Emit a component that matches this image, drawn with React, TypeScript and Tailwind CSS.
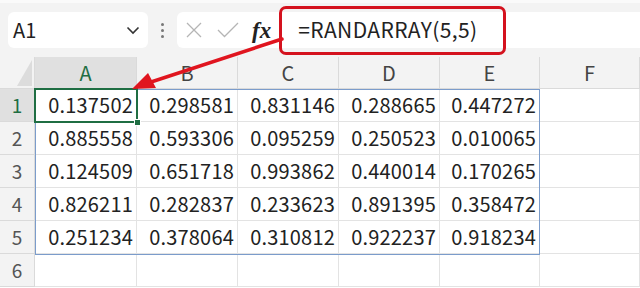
const data = [
  ["0.137502", "0.298581", "0.831146", "0.288665", "0.447272"],
  ["0.885558", "0.593306", "0.095259", "0.250523", "0.010065"],
  ["0.124509", "0.651718", "0.993862", "0.440014", "0.170265"],
  ["0.826211", "0.282837", "0.233623", "0.891395", "0.358472"],
  ["0.251234", "0.378064", "0.310812", "0.922237", "0.918234"],
];

const cols = ["A", "B", "C", "D", "E", "F"];

export default function App() {
  return (
    <div
      className="relative w-[640px] h-[288px] overflow-hidden bg-white text-[#222]"
      style={{ fontFamily: '"Noto Sans CJK JP", "Noto Sans", sans-serif' }}
    >
      {/* toolbar */}
      <div className="h-[57px] bg-[#f3f3f3] flex items-center border-t-[3px] border-[#fafafa]">
        <div className="ml-2 w-[140px] h-9 bg-white rounded-md flex items-center justify-between pl-[5px] pr-[6px]">
          <span className="text-[20px] text-[#222]">A1</span>
          <svg width="14" height="10" viewBox="0 0 14 10" className="mr-[2px]">
            <path d="M1.5 2.5 L7 8 L12.5 2.5" fill="none" stroke="#333" strokeWidth="1.6" />
          </svg>
        </div>
        <div className="w-[29px] flex flex-col items-center gap-[3px]">
          <span className="w-[3px] h-[3px] rounded-full bg-[#777]" />
          <span className="w-[3px] h-[3px] rounded-full bg-[#777]" />
          <span className="w-[3px] h-[3px] rounded-full bg-[#777]" />
        </div>
        <div className="flex-1 h-9 bg-white rounded-l-md flex items-center">
          <svg width="16" height="16" viewBox="0 0 16 16" className="ml-[9px]">
            <path d="M1 1 L15 15 M15 1 L1 15" stroke="#b5b5b5" strokeWidth="1.3" />
          </svg>
          <svg width="22" height="16" viewBox="0 0 22 16" className="ml-[15px]">
            <path d="M1 8 L7.5 14.5 L21 1" fill="none" stroke="#b5b5b5" strokeWidth="1.3" />
          </svg>
          <span
            className="ml-[13px] text-[23px] italic font-semibold text-[#222] leading-none"
            style={{ fontFamily: '"Liberation Serif", serif' }}
          >
            fx
          </span>
          <div className="ml-[8px] w-[227px] h-[49px] shrink-0 border-[3px] border-[#d4121e] rounded-[7px] flex items-center pl-[16px]">
            <span className="text-[21px] text-[#222] tracking-[0.4px]">=RANDARRAY(5,5)</span>
          </div>
        </div>
      </div>

      {/* grid */}
      <div className="relative grid grid-cols-[35px_102px_101px_101px_101px_100px_100px] grid-rows-[32px_repeat(6,33px)]">
        <div className="bg-[#f3f3f3] border-r border-b border-[#dadada] relative">
          <svg width="35" height="32" viewBox="0 0 35 32" className="absolute inset-0">
            <path d="M32 3 L32 29 L17 29 Z" fill="#dcdcdc" />
          </svg>
        </div>
        {cols.map((c) => (
          <div
            key={c}
            className={`flex items-center justify-center text-[20px] border-r border-b border-[#dadada] ${
              c === "A" ? "bg-[#e0e0e0] text-[#1f6e43]" : "bg-[#f3f3f3] text-[#444]"
            }`}
          >
            {c}
          </div>
        ))}
        {[1, 2, 3, 4, 5, 6].map((r) => (
          <>
            <div
              key={`h${r}`}
              className={`flex items-center justify-center text-[19px] border-r border-b border-[#dadada] ${
                r === 1 ? "bg-[#e0e0e0] text-[#1f6e43]" : "bg-[#f3f3f3] text-[#555]"
              }`}
            >
              {r}
            </div>
            {cols.map((c, ci) => (
              <div
                key={`${c}${r}`}
                className="flex items-center justify-end pr-[3px] text-[20px] tracking-[0.2px] text-[#222] border-r border-b border-[#e3e3e3]"
              >
                {r <= 5 && ci < 5 ? data[r - 1][ci] : ""}
              </div>
            ))}
          </>
        ))}

        {/* spill range border */}
        <div className="absolute left-[35px] top-[32px] w-[505px] h-[166px] border border-[#7b9ccb] pointer-events-none" />
        {/* active cell */}
        <div className="absolute left-[34px] top-[31px] w-[104px] h-[35px] border-2 border-[#1f6e43] pointer-events-none" />
        <div className="absolute left-[134px] top-[62px] w-[7px] h-[7px] bg-[#1f6e43] border border-white pointer-events-none" />
      </div>

      {/* arrow */}
      <svg width="640" height="288" viewBox="0 0 640 288" className="absolute inset-0 pointer-events-none">
        <path d="M282 39 L148 83" stroke="#e0151f" strokeWidth="3.5" strokeLinecap="round" />
        <path d="M132 89 L148 73 L156 88 Z" fill="#e0151f" />
      </svg>
    </div>
  );
}
